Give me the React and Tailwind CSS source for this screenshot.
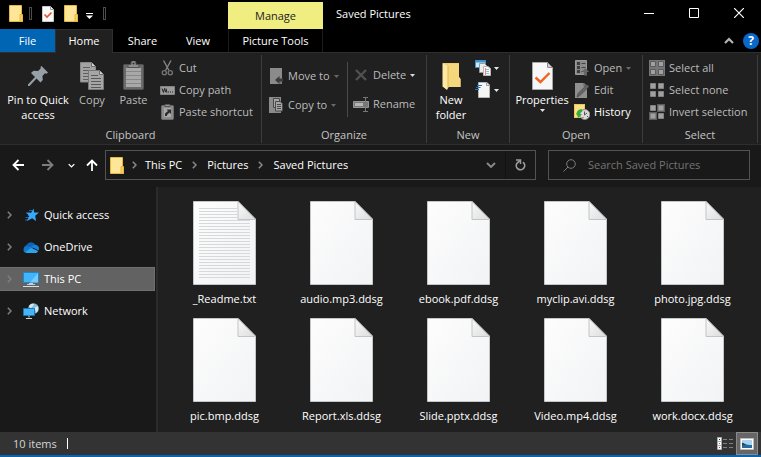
const files = [
  { name: '_Readme.txt', lined: true },
  { name: 'audio.mp3.ddsg' },
  { name: 'ebook.pdf.ddsg' },
  { name: 'myclip.avi.ddsg' },
  { name: 'photo.jpg.ddsg' },
  { name: 'pic.bmp.ddsg' },
  { name: 'Report.xls.ddsg' },
  { name: 'Slide.pptx.ddsg' },
  { name: 'Video.mp4.ddsg' },
  { name: 'work.docx.ddsg' },
];

const Svg = ({ w, h, className = '', children }) => (
  <svg width={w} height={h} viewBox={`0 0 ${w} ${h}`} fill="none" aria-hidden="true" className={`block shrink-0 ${className}`}>
    {children}
  </svg>
);

/* ---------- small glyphs ---------- */

const FolderIcon = () => (
  <Svg w={14} h={17}>
    <path d="M0.5 0.5h12v12.5h1v3.5h-13z" fill="#ffe598" stroke="#e5b93c" />
    <path d="M11 16v-6.500h2.500v7h-2.500z" fill="#f5cf61" stroke="#e5b93c" />
  </Svg>
);

const CheckPage = () => (
  <Svg w={12} h={16}>
    <path d="M0.500 0.500h8l3 3v12h-11z" fill="#fafafa" stroke="#c9c9c9" />
    <path d="M8.500 0.500v3h3" stroke="#9a9a9a" />
    <path d="M2.500 8.500l2.500 2.500 4.500-4.500" stroke="#e8502a" strokeWidth="1.600" />
  </Svg>
);

const Grip = () => <span className="h-[13px] w-[3px] border border-[#4d4d4d]" />;

const Caret = ({ className = 'text-[#e6e6e6]' }) => (
  <Svg w={5} h={3} className={className}>
    <path d="M0 0h5L2.500 3z" fill="currentColor" />
  </Svg>
);

const Chevron = ({ className = 'text-[#8a8a8a]' }) => (
  <Svg w={5} h={8} className={className}>
    <path d="M0.800 0.800L4 4 0.800 7.200" stroke="currentColor" strokeWidth="1.500" />
  </Svg>
);

const ChevronDown = ({ w = 10, className = '' }) => (
  <svg width={w} height={w} viewBox="0 0 10 10" fill="none" aria-hidden="true" className={`block shrink-0 ${className}`}>
    <path d="M1 3l4 4 4-4" stroke="currentColor" strokeWidth="1.900" />
  </svg>
);

const LeftArrow = ({ className = '' }) => (
  <Svg w={12} h={12} className={className}>
    <path d="M12 6H1.500M6.500 1L1.500 6l5 5" stroke="currentColor" strokeWidth="1.800" />
  </Svg>
);

/* ---------- ribbon icons ---------- */

const PinIcon = () => (
  <Svg w={20} h={20}>
    <path d="M13.500 0l6.500 6.500-1.500 1.200-1.500-0.400-2.600 2.600 0.400 4.100-2.300 2.500-4-4L1.500 20H0v-1.500l7-7.500-4-4 2.500-2.300 4.500 0.300 2.700-2.500-0.200-1.500z" fill="#96a0a8" />
  </Svg>
);

const CopyIcon = () => (
  <Svg w={25} h={28}>
    <path d="M0.500 0.500h11l4 4V20h-15z" fill="#a3a3a3" stroke="#888" />
    <path d="M3 5.500h7M3 8.500h10M3 11.500h10M3 14.500h10M3 17.500h10" stroke="#5f5f5f" />
    <path d="M11.500 0.500v4h4" fill="#d0d0d0" stroke="#6f6f6f" />
    <path d="M8.500 8.500h11l4 4v15h-15z" fill="#a6a6a6" stroke="#777" />
    <path d="M11 13.500h7M11 16.500h10M11 19.500h10M11 22.500h10M11 25.500h10" stroke="#595959" />
    <path d="M19.500 8.500v4h4" fill="#d0d0d0" stroke="#6f6f6f" />
  </Svg>
);

const PasteIcon = () => (
  <Svg w={21} h={29}>
    <rect x="0.500" y="3.500" width="20" height="25" rx="1" fill="#6b6b6b" stroke="#515151" />
    <path d="M3 7h15v19H3z" fill="#a8a8a8" />
    <path d="M3 10.500h15M3 14.500h15M3 18.500h15M3 22.500h15" stroke="#888" />
    <path d="M5 6.500V3.500h3V2a2 2 0 0 1 5 0v1.500h3v3z" fill="#8e8e8e" stroke="#515151" />
    <circle cx="10.500" cy="2.500" r="1" fill="#333" />
  </Svg>
);

const CutIcon = () => (
  <Svg w={15} h={16}>
    <path d="M3.500 0.500l5.500 10M11 0.500l-5.500 10" stroke="#858585" strokeWidth="1.400" />
    <circle cx="4.300" cy="12.800" r="2.100" stroke="#777" strokeWidth="1.300" />
    <circle cx="10.300" cy="12.800" r="2.100" stroke="#777" strokeWidth="1.300" />
  </Svg>
);

const CopyPathIcon = () => (
  <Svg w={15} h={9}>
    <path d="M0.500 0.500h14v8h-14z" fill="#9c9c9c" stroke="#838383" />
    <path d="M2 2.500l1.500 4 1-4 1.500 4M6 2.500l1 4" stroke="#222" />
    <path d="M8 5.500h1v1h-1zM10 5.500h1v1h-1zM12 5.500h1v1h-1z" fill="#222" />
  </Svg>
);

const PasteShortcutIcon = () => (
  <Svg w={13} h={16}>
    <rect x="0.500" y="1.500" width="12" height="14" rx="1" fill="#8b8b8b" stroke="#6c6c6c" />
    <path d="M3 4h7v9H3z" fill="#a9a9a9" />
    <path d="M4 0.500h5v2H4z" fill="#999" stroke="#555" />
    <path d="M4 12V9.500l3-2.500-1.500-1.500H10V10L8.500 8.500 6 11v1z" fill="#2c2c2c" />
  </Svg>
);

const MoveToIcon = () => (
  <Svg w={13} h={16}>
    <path d="M0 0h12v16H0z" fill="#8b8b8b" />
    <path d="M9.500 11v5h2.500v-5z" fill="#777" />
    <path d="M13 10.500v3H9.500V16L5 12l4.500-4v2.500z" fill="#3b3b3b" />
  </Svg>
);

const CopyToIcon = () => (
  <Svg w={14} h={16}>
    <path d="M0 0h12v16H0z" fill="#8b8b8b" />
    <path d="M4.500 1.500h6v9h-6z" fill="#a5a5a5" stroke="#4a4a4a" />
    <path d="M6.500 4.500h4.500l2.500 2v7.500h-7z" fill="#a5a5a5" stroke="#4a4a4a" />
    <path d="M8 7.500h4M8 9.500h4M8 11.500h4" stroke="#4a4a4a" />
  </Svg>
);

const DeleteIcon = () => (
  <Svg w={16} h={12}>
    <path d="M3 1l10 10M13 1L3 11" stroke="#505050" strokeWidth="2.400" />
  </Svg>
);

const RenameIcon = () => (
  <Svg w={16} h={15}>
    <path d="M0.500 4.500h15v6h-15z" fill="#777" stroke="#969696" />
    <path d="M2 6h8v3H2z" fill="#b5b5b5" />
    <path d="M12.500 1v13M10 0.500h5M10 14.500h5" stroke="#777" />
  </Svg>
);

const NewFolderIcon = () => (
  <Svg w={19} h={28}>
    <path d="M1 1h16v14l1.500 2v8H5z" fill="#f1ce6b" />
    <path d="M6 2h11v13l1.500 2v8H6z" fill="#f5d77e" />
    <path d="M0.500 1L6 4v22l-1 2-4.500-3.500z" fill="#ffe8a4" />
    <path d="M6 4v22" stroke="#ddb64e" />
  </Svg>
);

const NewItemIcon = () => (
  <Svg w={16} h={16}>
    <path d="M0.500 0.500h10v7h-10z" fill="#cfe9fa" stroke="#3f93cd" />
    <path d="M1 1.500h9" stroke="#3f93cd" strokeWidth="2" />
    <path d="M4.500 3.500h5l2 2v7h-7z" fill="#eee" stroke="#999" />
    <path d="M8.500 6.500h4.500l2.500 2v7h-7z" fill="#f8f8f8" stroke="#b8b8b8" />
    <path d="M10 9.500h4M10 11.500h4M10 13.500h4" stroke="#9dbbe0" />
    <path d="M10.500 8v7" stroke="#e98b7a" />
  </Svg>
);

const EasyAccessIcon = () => (
  <Svg w={16} h={16}>
    <path d="M3.500 0.500h8.500l2.500 2.500v12.500h-11z" fill="#f5f5f5" stroke="#b5b5b5" />
    <path d="M11.500 0.500v3h3" stroke="#999" />
    <path d="M2 3.500h5M1 5.500h4.500M0 7.500h4" stroke="#2471b8" />
  </Svg>
);

const PropertiesIcon = () => (
  <Svg w={21} h={28}>
    <path d="M0.500 0.500h15l5 5v22h-20z" fill="#f7f7f7" stroke="#a8a8a8" />
    <path d="M15.500 0.500v5h5z" fill="#ccc" stroke="#8f8f8f" />
    <path d="M3.500 15.500l5 4.500 9-9" stroke="#f26322" strokeWidth="2.400" />
  </Svg>
);

const OpenIcon = () => (
  <Svg w={14} h={16}>
    <path d="M0.500 0.500h11v14h-11z" fill="#8a8a8a" stroke="#999" />
    <path d="M2 2h3v3H2zM2 6h3v3H2zM2 10h3v3H2z" fill="#3e3e3e" />
    <path d="M6.500 3.500h4M6.500 7.500h4M6.500 11.500h2" stroke="#444" />
    <path d="M9 15.500v-3.500H7l3.500-4 3.500 4h-2v3.500z" fill="#666" />
  </Svg>
);

const EditIcon = () => (
  <Svg w={14} h={16}>
    <path d="M0 1h9l3 3v12H0z" fill="#8f8f8f" />
    <path d="M9 1v3h3" stroke="#5a5a5a" />
    <path d="M2 15l1-3.500L12 2.500l2 2L5 13.500z" fill="#666" stroke="#404040" strokeWidth="0.600" />
  </Svg>
);

const HistoryIcon = () => (
  <Svg w={16} h={16}>
    <path d="M0 0h11v14H0z" fill="#fde18a" />
    <path d="M0.500 0.500h10v13h-10z" stroke="#eec75a" />
    <circle cx="10.800" cy="10.500" r="5" fill="#dadada" stroke="#8c8c8c" />
    <path d="M10.500 7.500v3.500l2.500-2M8.500 13.500h1M13 12.500h1" stroke="#555" />
    <path d="M2.500 9.500C3 6.500 5.500 4.500 8.500 5.500L8 8C6.500 8 6 9 6 10h2l-3.500 4L2 9.500z" fill="#36ad3d" />
  </Svg>
);

const SelectAllIcon = () => (
  <Svg w={16} h={16}>
    <path d="M0 0h16v16H0z" fill="#777" />
    <path d="M1.500 1.500h5v5h-5zM9.500 1.500h5v5h-5zM1.500 9.500h5v5h-5zM9.500 9.500h5v5h-5z" fill="#a0a0a0" stroke="#5c5c5c" />
  </Svg>
);

const SelectNoneIcon = () => (
  <Svg w={16} h={16}>
    <path d="M1.500 1.500h5v5h-5zM9.500 1.500h5v5h-5zM1.500 9.500h5v5h-5zM9.500 9.500h5v5h-5z" fill="#a0a0a0" stroke="#828282" />
  </Svg>
);

const InvertIcon = () => (
  <Svg w={16} h={16}>
    <path d="M8 0h8v8H8zM0 8h8v8H0z" fill="#5c5c5c" />
    <path d="M1.500 1.500h5v5h-5zM9.500 1.500h5v5h-5zM1.500 9.500h5v5h-5zM9.500 9.500h5v5h-5z" fill="#a0a0a0" stroke="#828282" />
  </Svg>
);

/* ---------- sidebar icons ---------- */

const StarIcon = () => (
  <Svg w={16} h={14}>
    <path d="M6 2.500h3M3 5h4M5 7.500h3M2.500 9.500h4M2 12h3" stroke="#1566b0" />
    <path d="M10.500 0.500l0.700 4H16l-3.800 3.200 0.900 5.300-4-2.800L4 13l2.200-5.100L3.600 4.700h4.500z" fill="#38a9f8" />
  </Svg>
);

const CloudIcon = () => (
  <Svg w={16} h={11}>
    <path d="M2 9.500A4 4 0 0 1 3.500 3 5 5 0 0 1 12.500 3l-4 5z" fill="#0f63b8" />
    <path d="M8 4.500L12 2.800a3.800 3.800 0 0 1 3.500 5.700z" fill="#1583d8" />
    <path d="M1 8.500c1-3 5-4.500 7.500-2.500L15 9c0 1.500-1.500 2-3 2H4c-2 0-3-1-3-2.500z" fill="#2aa4ea" />
    <path d="M0.500 8A3.500 3.500 0 0 1 5 4.500L8 6 2 10.300C1 10 0.500 9 0.500 8z" fill="#1276ca" />
  </Svg>
);

const PcIcon = () => (
  <Svg w={16} h={15}>
    <path d="M0.500 0.500h15v10h-15z" fill="#43b3fa" stroke="#1d87cb" />
    <path d="M15 1v9.500H7z" fill="#75caff" />
    <path d="M6 11.500h4M4 12.500h8" stroke="#c6d0d7" />
    <path d="M0 14.500h16" stroke="#d8dee2" />
  </Svg>
);

const NetworkIcon = () => (
  <Svg w={16} h={16}>
    <circle cx="10.500" cy="5.500" r="5.300" fill="#86b9d8" />
    <path d="M6 3c2-3 5-2.500 5-1.500S8 4 8 6zM11 5l3.500-2c1.500 2.500 0.500 5-1 6.500z" fill="#d5e6ed" />
    <path d="M0.500 5.500h11v7h-11z" fill="#45b5f8" stroke="#1b77b5" />
    <path d="M6 12.500v2M3 15.500h6" stroke="#cfd6da" />
  </Svg>
);

const FileIcon = ({ lined }) => (
  <Svg w={63} h={84}>
    <defs>
      <linearGradient id="paper" x1="0" y1="0" x2="1" y2="1">
        <stop offset="0" stopColor="#fdfdfd" />
        <stop offset="1" stopColor="#f2f3f5" />
      </linearGradient>
      <linearGradient id="fold" x1="0" y1="0" x2="1" y2="1">
        <stop offset="0" stopColor="#fafafa" />
        <stop offset="1" stopColor="#dcdcdc" />
      </linearGradient>
    </defs>
    <path d="M0.500 0.500h44.500l17.500 17.500v65.500h-62z" fill="url(#paper)" stroke="#c4c6c8" />
    {lined && (
      <g stroke="#d7d8da">
        {Array.from({ length: 24 }, (_, i) => (
          <path key={i} d={`M6 ${7.5 + i * 3}H${i < 4 ? 44 : 57}`} />
        ))}
      </g>
    )}
    <path d="M45 0.500v18h17.500z" fill="url(#fold)" stroke="#c2c4c6" />
  </Svg>
);

/* ---------- ribbon building blocks ---------- */

const Group = ({ label, className = '', children }) => (
  <section aria-label={label} className={`flex shrink-0 flex-col border-r border-[#3c3c3c] ${className}`}>
    <div className="flex flex-1 items-start">{children}</div>
    <div className="text-center leading-4 text-[#c4c4c4]">{label}</div>
  </section>
);

const BigButton = ({ icon, className = '', children }) => (
  <button className={`flex flex-col items-center gap-0.5 pt-1.5 leading-[15px] ${className}`}>
    <span className="flex h-[29px] items-center">{icon}</span>
    {children}
  </button>
);

const SmallButton = ({ icon, label, caret, className = 'text-[#bcbcbc]' }) => (
  <button className={`flex h-[22px] items-center gap-1 whitespace-nowrap ${className}`}>
    <span className="flex w-4 justify-center">{icon}</span>
    {label}
    {caret && <Caret className={caret} />}
  </button>
);

const Titlebar = () => (
  <header className="flex h-[29px] shrink-0 bg-black">
    <div className="flex w-[228px] shrink-0 items-center pl-[9px] pb-0.5">
      <FolderIcon />
      <span className="ml-1.5 flex"><Grip /></span>
      <button aria-label="Properties" className="ml-2.5"><CheckPage /></button>
      <button aria-label="New folder" className="ml-2.5"><FolderIcon /></button>
      <button aria-label="Customize toolbar" className="mt-1 ml-2 text-white">
        <Svg w={7} h={6}><path d="M0 0.500h7" stroke="currentColor" /><path d="M0 2.500h7L3.500 6z" fill="currentColor" /></Svg>
      </button>
      <span className="ml-2.5 flex"><Grip /></span>
    </div>
    <div className="mt-0.5 flex w-[95px] shrink-0 items-center justify-center bg-[#f0ee80] text-[#222]">Manage</div>
    <h1 className="flex-1 truncate pb-0.5 pl-[13px] leading-7">Saved Pictures</h1>
    <div className="flex shrink-0 pb-[3px]">
      <button aria-label="Minimize" className="flex w-[45px] items-center justify-center">
        <Svg w={10} h={11}><path d="M0 5.500h10" stroke="#fff" /></Svg>
      </button>
      <button aria-label="Maximize" className="flex w-[45px] items-center justify-center">
        <Svg w={10} h={10}><path d="M0.500 0.500h9v9h-9z" stroke="#fff" /></Svg>
      </button>
      <button aria-label="Close" className="flex w-[45px] items-center justify-center">
        <Svg w={10} h={10}><path d="M0 0l10 10M10 0L0 10" stroke="#fff" strokeWidth="1.200" /></Svg>
      </button>
    </div>
  </header>
);

const Tabs = () => (
  <nav className="flex h-[23px] shrink-0 bg-black leading-5">
    <button className="w-[55px] bg-[#0066b4]">File</button>
    <button className="relative z-10 -mb-px w-[58px] border-x border-t border-[#2e2e2e] bg-[#202020] pb-0.5">Home</button>
    <button className="w-[59px]">Share</button>
    <button className="w-[56px] pr-1">View</button>
    <button className="w-[95px] border-x border-[#1c1c1c]">Picture Tools</button>
    <div className="ml-auto flex items-center gap-[9px] pr-0.5">
      <button aria-label="Collapse the ribbon">
        <Svg w={10} h={7}><path d="M1 6l4-4 4 4" stroke="#b4b4b4" strokeWidth="2.200" /></Svg>
      </button>
      <button aria-label="Help" className="flex h-4 w-4 items-center justify-center rounded-full bg-[#0a68c9] text-[12px] leading-4 font-bold">?</button>
    </div>
  </nav>
);

const Ribbon = () => (
  <div className="flex h-[93px] shrink-0 overflow-hidden border-y border-[#2e2e2e] bg-[#202020] pt-0.5 pb-px">
    <Group label="Clipboard" className="w-[262px]">
      <BigButton icon={<PinIcon />} className="w-[76px]">
        <span>Pin to Quick<br />access</span>
      </BigButton>
      <BigButton icon={<CopyIcon />} className="w-8 text-[#bcbcbc]">Copy</BigButton>
      <BigButton icon={<PasteIcon />} className="w-[51px] text-[#bcbcbc]">Paste</BigButton>
      <div className="flex flex-col pt-0.5">
        <SmallButton icon={<CutIcon />} label="Cut" />
        <SmallButton icon={<CopyPathIcon />} label="Copy path" />
        <SmallButton icon={<PasteShortcutIcon />} label="Paste shortcut" />
      </div>
    </Group>
    <Group label="Organize" className="w-[165px]">
      <div className="flex w-[85px] flex-col gap-[7px] pt-2.5 pl-1.5">
        <SmallButton icon={<MoveToIcon />} label="Move to" caret="text-[#686868]" />
        <SmallButton icon={<CopyToIcon />} label="Copy to" caret="text-[#686868]" />
      </div>
      <div className="mt-[7px] flex h-[55px] flex-col justify-center gap-[7px] border-l border-[#4a4a4a] pl-[5px]">
        <SmallButton icon={<DeleteIcon />} label="Delete" caret="text-[#d8d8d8]" />
        <SmallButton icon={<RenameIcon />} label="Rename" />
      </div>
    </Group>
    <Group label="New" className="w-[83px]">
      <BigButton icon={<NewFolderIcon />} className="w-12">
        <span>New<br />folder</span>
      </BigButton>
      <div className="flex flex-col pt-0.5">
        <button aria-label="New item" className="flex h-[22px] items-center gap-[3px]"><NewItemIcon /><Caret /></button>
        <button aria-label="Easy access" className="flex h-[22px] items-center gap-[3px]"><EasyAccessIcon /><Caret /></button>
      </div>
    </Group>
    <Group label="Open" className="w-[133px]">
      <BigButton icon={<PropertiesIcon />} className="w-16">
        Properties
        <Caret />
      </BigButton>
      <div className="flex flex-col pt-0.5">
        <SmallButton icon={<OpenIcon />} label="Open" caret="text-[#686868]" />
        <SmallButton icon={<EditIcon />} label="Edit" />
        <SmallButton icon={<HistoryIcon />} label="History" className="text-white" />
      </div>
    </Group>
    <Group label="Select" className="w-[115px]">
      <div className="flex flex-col pt-0.5 pl-1.5">
        <SmallButton icon={<SelectAllIcon />} label="Select all" />
        <SmallButton icon={<SelectNoneIcon />} label="Select none" />
        <SmallButton icon={<InvertIcon />} label="Invert selection" />
      </div>
    </Group>
  </div>
);

const AddressBar = () => (
  <div className="flex shrink-0 items-center bg-[#191919] pt-[5px] pr-[11px] pb-[7px] pl-3">
    <button aria-label="Back"><LeftArrow /></button>
    <button aria-label="Forward" className="ml-[18px]"><LeftArrow className="rotate-180 text-[#7d7d7d]" /></button>
    <button aria-label="Recent locations" className="ml-3.5"><ChevronDown w={7} /></button>
    <button aria-label="Up" className="ml-[11px]"><LeftArrow className="rotate-90" /></button>
    <div className="ml-[7px] flex h-[30px] min-w-0 flex-1 items-center border border-[#535353] pl-1">
      <FolderIcon />
      <Chevron className="mx-2 text-[#8a8a8a]" />
      <a href="#pc">This PC</a>
      <Chevron className="mx-2.5 text-[#8a8a8a]" />
      <a href="#pictures">Pictures</a>
      <Chevron className="mx-2.5 text-[#8a8a8a]" />
      <a href="#saved" className="truncate">Saved Pictures</a>
      <button aria-label="Previous locations" className="ml-auto flex h-full w-[29px] items-center justify-center border-r border-[#111] text-[#8a8a8a]"><ChevronDown /></button>
      <button aria-label="Refresh" className="flex h-full w-[29px] items-center justify-center">
        <Svg w={11} h={12}>
          <path d="M8 3.200A4.200 4.200 0 1 1 2 4.200L5 1.500" stroke="#9b9b9b" strokeWidth="1.700" />
          <path d="M1 1h4.500v4" stroke="#9b9b9b" strokeWidth="1.500" />
        </Svg>
      </button>
    </div>
    <label className="ml-3 flex h-[30px] w-[202px] shrink-0 items-center gap-3 border border-[#535353] pl-3.5">
      <Svg w={13} h={13}>
        <circle cx="8" cy="5" r="4.300" stroke="#7c7c7c" />
        <path d="M5 8L0.500 12.500" stroke="#7c7c7c" />
      </Svg>
      <input type="search" aria-label="Search Saved Pictures" placeholder="Search Saved Pictures" className="w-full min-w-0 bg-transparent outline-none placeholder:text-[#747474]" />
    </label>
  </div>
);

const places = [
  { label: 'Quick access', icon: <StarIcon /> },
  { label: 'OneDrive', icon: <CloudIcon /> },
  { label: 'This PC', icon: <PcIcon />, active: true },
  { label: 'Network', icon: <NetworkIcon /> },
];

const Sidebar = () => (
  <nav className="flex w-[158px] shrink-0 flex-col gap-2 border-r-2 border-[#2b2b2b] bg-[#191919] pt-4 pr-px">
    {places.map((place) => (
      <a
        key={place.label}
        href="#place"
        className={`flex h-6 items-center pl-[7px] ${place.active ? 'border border-[#6f6f6f] border-l-0 bg-[#626262]' : ''}`}
      >
        <Chevron className="text-[#7f7f7f]" />
        <span className="ml-[11px] flex">{place.icon}</span>
        <span className="ml-[5px]">{place.label}</span>
      </a>
    ))}
  </nav>
);

export default function App() {
  return (
    <div className="flex h-screen cursor-default flex-col overflow-hidden bg-[#202020] font-['Open_Sans',sans-serif] text-[11px] leading-4 text-white">
      <Titlebar />
      <Tabs />
      <Ribbon />
      <AddressBar />
      <div className="flex min-h-0 flex-1">
        <Sidebar />
        <main className="grid flex-1 auto-rows-[117px] grid-cols-[repeat(auto-fill,117px)] overflow-hidden pt-3.5 pl-2">
          {files.map((file) => (
            <button key={file.name} className="flex flex-col items-center gap-1.5">
              <FileIcon lined={file.lined} />
              <span>{file.name}</span>
            </button>
          ))}
        </main>
      </div>
      <footer className="flex h-[25px] shrink-0 items-stretch border-b-2 border-[#0a64ad] bg-[#333]">
        <div className="flex items-center pl-[13px] text-[#d6d6d6]">
          10 items
          <span className="ml-2.5 h-[11px] w-px bg-white" />
        </div>
        <button aria-label="Details view" className="ml-auto flex items-center pr-[3px]">
          <Svg w={16} h={13}>
            <path d="M0.500 0.500h4v4h-4zM0.500 4.500h4v4h-4zM0.500 8.500h4v4h-4z" fill="#fff" stroke="#aaa" />
            <path d="M2 2h1v1H2z" fill="#333" />
            <path d="M2 6h1v1H2z" fill="#2f80d0" />
            <path d="M2 10h1v1H2z" fill="#c33" />
            <path d="M6 2.500h4M12 2.500h4M6 6.500h4M12 6.500h4M6 10.500h4M12 10.500h4" stroke="#808080" />
          </Svg>
        </button>
        <button aria-label="Large icons view" className="mr-[3px] flex w-[22px] items-center justify-center border border-[#8a8a8a] bg-[#666]">
          <Svg w={14} h={12}>
            <path d="M0.500 0.500h13v11h-13z" fill="#fff" stroke="#bcbcbc" />
            <path d="M2 2h10v8H2z" fill="#a9d4f1" />
            <path d="M2 5l3 1 4 1h3v3H2z" fill="#286a9b" />
            <path d="M2 4.500l4 2-4 1z" fill="#244638" />
          </Svg>
        </button>
      </footer>
    </div>
  );
}
